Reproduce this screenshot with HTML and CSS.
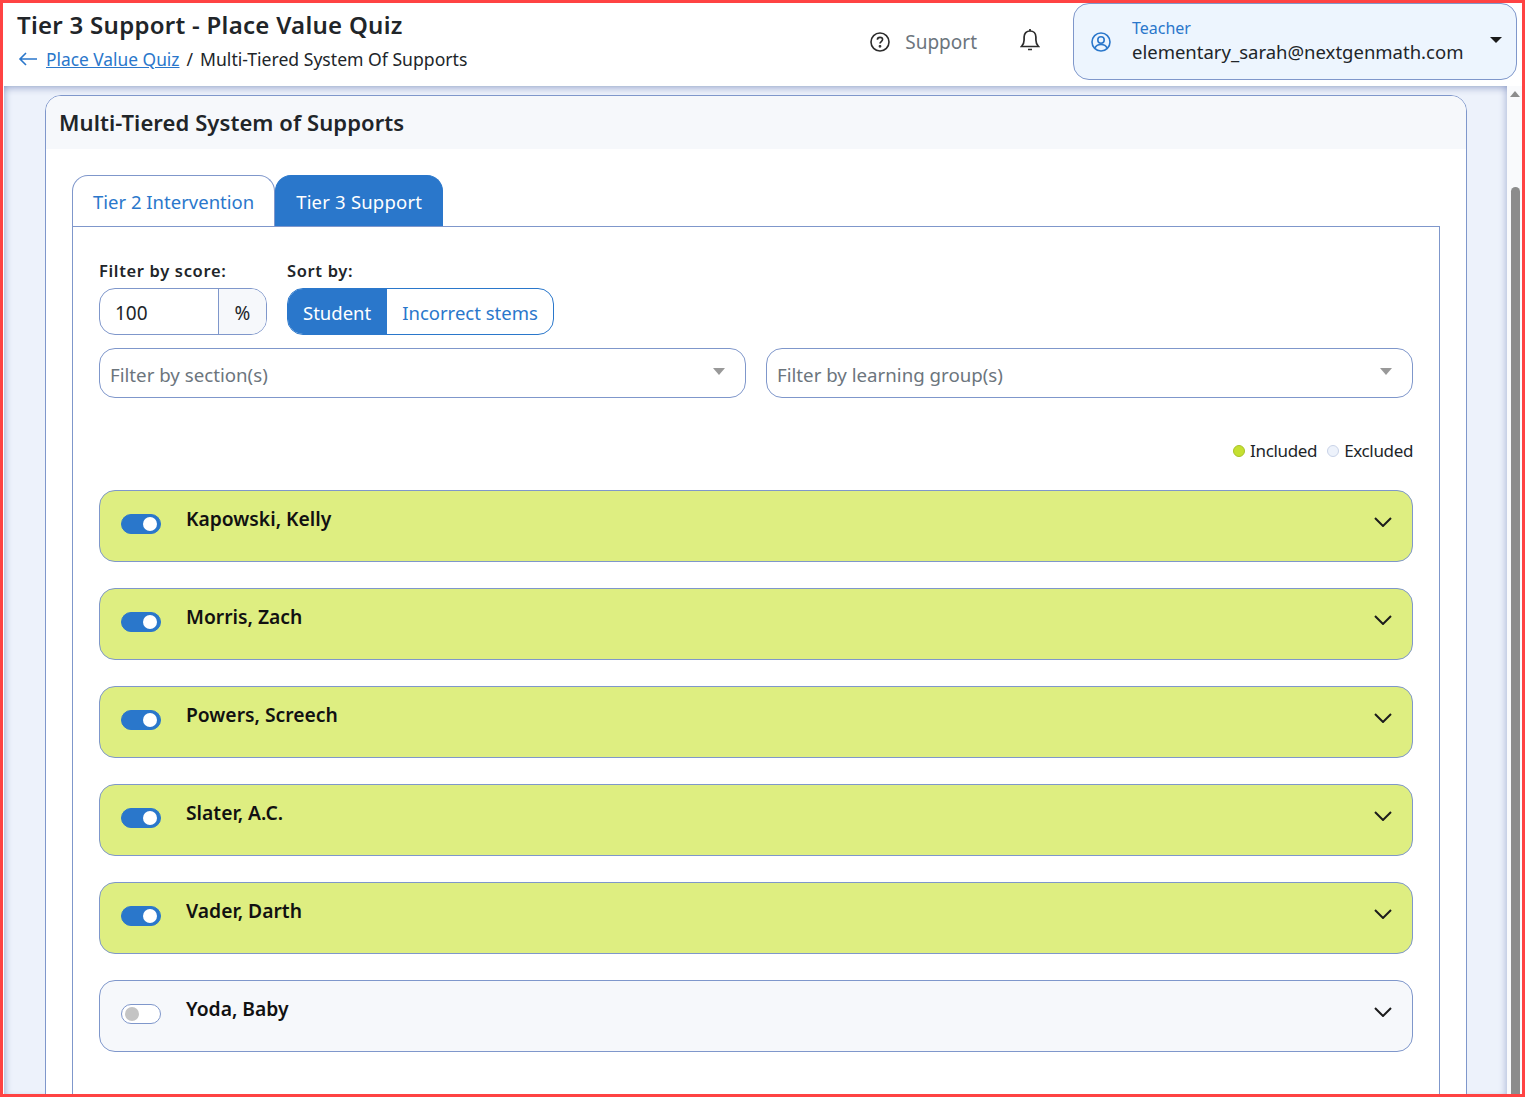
FILE: index.html
```html
<!DOCTYPE html>
<html>
<head>
    <meta charset="UTF-8">
    <title>Tier 3 Support - Place Value Quiz</title>
    <link rel="stylesheet" href="styles.css">
</head>
<body>
    <div class="topbar">
        <div class="page-title">
            <h1>Tier 3 Support - Place Value Quiz</h1>
            <div class="breadcrumb">
                <svg class="back-icon" viewBox="0 0 20 16" fill="none" stroke="currentColor" stroke-width="1.6">
                    <path d="M19 8H2M8 2L2 8l6 6"/>
                </svg>
                <a href="#">Place Value Quiz</a>
                <span class="crumb-sep">/</span>
                <span>Multi-Tiered System Of Supports</span>
            </div>
        </div>
        <div class="top-actions">
            <div class="support">
                <svg viewBox="0 0 20 20" fill="none" stroke="currentColor" stroke-width="1.6">
                    <circle cx="10" cy="10" r="9"/>
                    <path d="M7.4 7.8C7.4 6.2 8.6 5.4 10 5.4s2.6.9 2.6 2.2c0 1.9-2.6 2-2.6 3.9"/>
                    <circle cx="10" cy="14.3" r=".6"/>
                </svg>
                <span>Support</span>
            </div>
            <svg class="bell" viewBox="0 0 20 24" fill="none" stroke="currentColor" stroke-width="1.7">
                <path d="M1.5 18.5c1.8-1.8 2.6-3.4 2.6-6.5V9c0-3.6 2.4-6 5.900-6s5.900 2.400 5.900 6v3c0 3.100.8 4.700 2.600 6.500z"/>
                <path d="M10 1v2M8 21.500h4"/>
            </svg>
            <div class="user-box">
                <svg class="user-icon" viewBox="0 0 20 20" fill="none" stroke="currentColor" stroke-width="1.6">
                    <circle cx="10" cy="10" r="9"/>
                    <circle cx="10" cy="8" r="3.200"/>
                    <path d="M4 16c1-2.600 3-3.500 6-3.500s5 .9 6 3.500"/>
                </svg>
                <div class="user-text">
                    <div class="user-role">Teacher</div>
                    <div class="user-mail">elementary_sarah@nextgenmath.com</div>
                </div>
                <span class="caret"></span>
            </div>
        </div>
    </div>

    <div class="page-body">
        <div class="content">
            <div class="card">
                <div class="card-head">Multi-Tiered System of Supports</div>
                <div class="card-body">
                    <div class="tabs">
                        <div class="tab">Tier 2 Intervention</div>
                        <div class="tab active">Tier 3 Support</div>
                    </div>
                    <div class="tab-panel">
                        <div class="filters">
                            <div class="field">
                                <label>Filter by score:</label>
                                <div class="score-input">
                                    <span class="score-value">100</span>
                                    <span class="score-unit">%</span>
                                </div>
                            </div>
                            <div class="field">
                                <label>Sort by:</label>
                                <div class="sort-group">
                                    <span class="sort-btn active">Student</span>
                                    <span class="sort-btn">Incorrect stems</span>
                                </div>
                            </div>
                        </div>
                        <div class="selects">
                            <div class="select-box">Filter by section(s)<span class="select-arrow"></span></div>
                            <div class="select-box">Filter by learning group(s)<span class="select-arrow"></span></div>
                        </div>
                        <div class="legend">
                            <span class="dot included"></span><span>Included</span>
                            <span class="dot excluded"></span><span>Excluded</span>
                        </div>
                        <div class="students">
                            <div class="student on">
                                <span class="toggle"></span>
                                <span class="student-name">Kapowski, Kelly</span>
                                <svg class="chevron" viewBox="0 0 18 10" fill="none" stroke="currentColor" stroke-width="2"><path d="M1 1l8 8 8-8"/></svg>
                            </div>
                            <div class="student on">
                                <span class="toggle"></span>
                                <span class="student-name">Morris, Zach</span>
                                <svg class="chevron" viewBox="0 0 18 10" fill="none" stroke="currentColor" stroke-width="2"><path d="M1 1l8 8 8-8"/></svg>
                            </div>
                            <div class="student on">
                                <span class="toggle"></span>
                                <span class="student-name">Powers, Screech</span>
                                <svg class="chevron" viewBox="0 0 18 10" fill="none" stroke="currentColor" stroke-width="2"><path d="M1 1l8 8 8-8"/></svg>
                            </div>
                            <div class="student on">
                                <span class="toggle"></span>
                                <span class="student-name">Slater, A.C.</span>
                                <svg class="chevron" viewBox="0 0 18 10" fill="none" stroke="currentColor" stroke-width="2"><path d="M1 1l8 8 8-8"/></svg>
                            </div>
                            <div class="student on">
                                <span class="toggle"></span>
                                <span class="student-name">Vader, Darth</span>
                                <svg class="chevron" viewBox="0 0 18 10" fill="none" stroke="currentColor" stroke-width="2"><path d="M1 1l8 8 8-8"/></svg>
                            </div>
                            <div class="student">
                                <span class="toggle"></span>
                                <span class="student-name">Yoda, Baby</span>
                                <svg class="chevron" viewBox="0 0 18 10" fill="none" stroke="currentColor" stroke-width="2"><path d="M1 1l8 8 8-8"/></svg>
                            </div>
                        </div>
                    </div>
                </div>
            </div>
        </div>
        <div class="scrollbar">
            <span class="scroll-up"></span>
            <div class="scroll-thumb"></div>
        </div>
    </div>
</body>
</html>
```

FILE: styles.css
```css
:root {
    --primary: #2a77cb;
    --border: #7f97cb;
    --surface: #f6f8fb;
    --page: #edf2fb;
    --text: #212529;
    --lime: #deee81;
}

* {
    box-sizing: border-box;
}

html, body {
    height: 100%;
}

body {
    margin: 0;
    border: 3px solid #ff4343;
    font-family: "Noto Sans", sans-serif;
    color: var(--text);
    background: #fff;
    overflow: hidden;
    display: flex;
    flex-direction: column;
}

/* top bar */
.topbar {
    height: 83px;
    flex: none;
    display: flex;
    justify-content: space-between;
    padding: 0 5px 0 14px;
    background: #fff;
}

h1 {
    margin: 5px 0 0;
    font-size: 24px;
    line-height: 33px;
    font-weight: 600;
    letter-spacing: .28px;
}

.breadcrumb {
    display: flex;
    align-items: center;
    gap: 7px;
    margin-top: 6px;
    font-size: 17.600px;
    line-height: 24px;
}

.breadcrumb a {
    font-size: 17.350px;
    color: var(--primary);
}

.back-icon {
    width: 20px;
    height: 16px;
    margin-left: 1px;
    margin-right: 1px;
    color: var(--primary);
}

.top-actions {
    display: flex;
    align-items: flex-start;
}

.support {
    display: flex;
    align-items: center;
    gap: 15px;
    margin-top: 26px;
    font-size: 19px;
    line-height: 26px;
    color: #6c757d;
}

.support svg {
    width: 20px;
    height: 20px;
    color: #2b2b2b;
}

.bell {
    width: 20px;
    height: 24px;
    margin: 25px 33px 0 43px;
    color: #2b2b2b;
}

.user-box {
    width: 444px;
    height: 77px;
    display: flex;
    align-items: center;
    padding: 0 14px 4px 17px;
    background: #edf5fe;
    border: 1px solid var(--border);
    border-radius: 16px;
}

.user-icon {
    width: 20px;
    height: 20px;
    margin-top: 4px;
    color: var(--primary);
    flex: none;
}

.user-text {
    margin-left: 21px;
    flex: 1;
}

.user-role {
    font-size: 16px;
    line-height: 24px;
    color: var(--primary);
}

.user-mail {
    font-size: 18.500px;
    line-height: 24px;
    color: var(--text);
}

.caret {
    width: 0;
    height: 0;
    border-left: 6px solid transparent;
    border-right: 6px solid transparent;
    border-top: 6px solid #1a1a1a;
}

/* page area */
.page-body {
    flex: 1;
    min-height: 0;
    display: flex;
    margin-left: 1px;
    background: var(--page);
    box-shadow: inset 0 6px 6px -3px rgba(90, 110, 170, .4);
}

.content {
    flex: 1;
    min-width: 0;
    padding: 9px 40px 0 41px;
    box-shadow: inset 6px 0 6px -4px rgba(90, 110, 170, .35), inset -6px 0 6px -4px rgba(90, 110, 170, .35);
}

.card {
    background: #fff;
    border: 1px solid var(--border);
    border-radius: 16px;
    overflow: hidden;
}

.card-head {
    height: 53px;
    padding: 0 13px;
    background: var(--surface);
    font-size: 22px;
    line-height: 52px;
    font-weight: 600;
    letter-spacing: .08px;
}

.card-body {
    padding: 26px 26px 0;
}

.tabs {
    display: flex;
}

.tab {
    height: 51px;
    padding: 0 20px;
    font-size: 18.500px;
    line-height: 51px;
    color: var(--primary);
    border: 1px solid var(--border);
    border-bottom: 0;
    border-radius: 16px 16px 0 0;
}

.tab.active {
    letter-spacing: .2px;
    color: #fff;
    background: var(--primary);
    border-color: var(--primary);
}

.tab-panel {
    padding: 32px 26px 80px;
    border: 1px solid var(--border);
}

/* filters */
.filters {
    display: flex;
    gap: 20px;
}

label {
    display: block;
    margin-bottom: 5px;
    font-size: 16.500px;
    line-height: 23px;
    padding-bottom: 1px;
    font-weight: 600;
    letter-spacing: .65px;
}

.score-input {
    width: 168px;
    height: 47px;
    display: flex;
    border: 1px solid var(--border);
    border-radius: 16px;
    overflow: hidden;
    font-size: 19px;
    line-height: 48px;
}

.score-value {
    flex: 1;
    padding-left: 15px;
}

.score-unit {
    width: 48px;
    text-align: center;
    background: var(--surface);
    border-left: 1px solid var(--border);
}

.sort-group {
    height: 47px;
    display: flex;
    border: 1px solid var(--primary);
    border-radius: 16px;
    overflow: hidden;
    font-size: 18.500px;
    line-height: 48px;
    color: var(--primary);
}

.sort-btn {
    padding: 0 15px;
}

.sort-btn.active {
    padding-right: 16px;
    color: #fff;
    background: var(--primary);
}

.selects {
    display: flex;
    gap: 20px;
    margin-top: 13px;
}

.select-box {
    flex: 1;
    height: 50px;
    display: flex;
    justify-content: space-between;
    align-items: center;
    padding: 2px 20px 0 10px;
    border: 1px solid var(--border);
    border-radius: 16px;
    font-size: 18.700px;
    color: #6c757d;
}

.select-arrow {
    width: 0;
    height: 0;
    border-left: 6.500px solid transparent;
    border-right: 6.500px solid transparent;
    border-top: 7px solid #999;
    margin-bottom: 6px;
}

.legend {
    display: flex;
    justify-content: flex-end;
    align-items: center;
    margin-top: 40px;
    font-size: 17px;
    line-height: 26px;
    letter-spacing: -.35px;
}

.dot {
    width: 12px;
    height: 12px;
    margin-right: 5px;
    border-radius: 50%;
}

.dot.included {
    background: #c5e030;
    border: 1px solid #a9c229;
}

.dot.excluded {
    margin-left: 10px;
    background: var(--page);
    border: 1px solid #c9d3e8;
}

/* students */
.students {
    display: flex;
    flex-direction: column;
    gap: 26px;
    margin-top: 26px;
}

.student {
    height: 72px;
    display: flex;
    align-items: flex-start;
    padding: 0 20px 0 21px;
    background: var(--surface);
    border: 1px solid var(--border);
    border-radius: 16px;
}

.student.on {
    background: var(--lime);
}

.toggle {
    width: 40px;
    height: 20px;
    margin-top: 23px;
    display: flex;
    align-items: center;
    justify-content: flex-start;
    padding: 0 3px;
    background: #fff;
    border: 1px solid var(--border);
    border-radius: 10px;
    flex: none;
}

.toggle::after {
    content: "";
    width: 14px;
    height: 14px;
    border-radius: 50%;
    background: #c4c4c4;
}

.student.on .toggle {
    justify-content: flex-end;
    background: var(--primary);
    border-color: var(--primary);
}

.student.on .toggle::after {
    background: #fff;
}

.student-name {
    margin: 15px 0 0 25px;
    flex: 1;
    font-size: 19.300px;
    line-height: 26px;
    font-weight: 600;
    color: #111;
}

.chevron {
    width: 18px;
    height: 10px;
    margin-top: 26px;
    color: #1c1c1c;
}

/* fake scrollbar */
.scrollbar {
    width: 15px;
    flex: none;
    display: flex;
    flex-direction: column;
    align-items: center;
    background: #f9fafc;
    padding-top: 5px;
}

.scroll-up {
    width: 0;
    height: 0;
    border-left: 5px solid transparent;
    border-right: 5px solid transparent;
    border-bottom: 6px solid #8c8c8c;
}

.scroll-thumb {
    width: 9px;
    flex: 1;
    margin: 90px 0 0 1px;
    background: #8c8c8c;
    border-radius: 5px 5px 0 0;
}
```
